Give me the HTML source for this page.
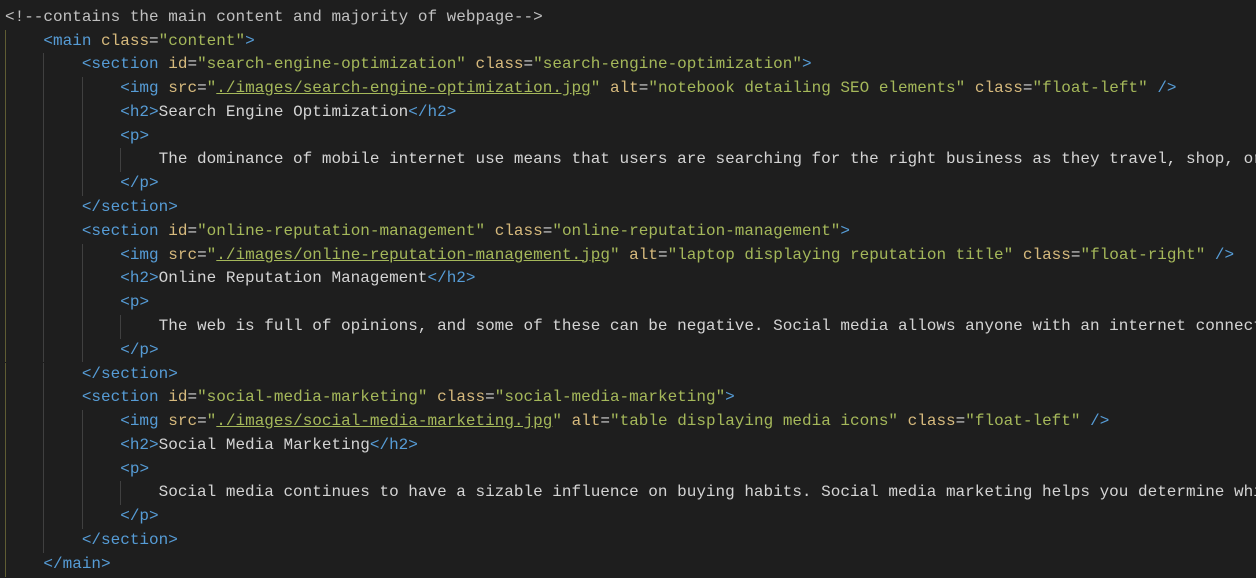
<!DOCTYPE html>
<html><head><meta charset="utf-8"><style>
body{margin:0;background:#1e1e1e;width:1256px;height:578px;overflow:hidden;position:relative;font-family:"Liberation Mono",monospace;font-size:16px}
.l{position:absolute;left:5px;height:23.78px;line-height:23.78px;white-space:pre;color:#d4d4d4}
.g{position:absolute;width:1px;height:23.78px;background:#404040}
.g0{background:#5f5c33}
.t{color:#569cd6}.n{color:#569cd6}.a{color:#d7ba7d}.s{color:#a5b85a}.c{color:#c0c0c0}
.u{text-decoration:underline;text-decoration-color:#a5b85a}
</style></head><body>
<script>
const L=[
[0,'<span class="c">&lt;!--contains the main content and majority of webpage--&gt;</span>'],
[1,'<span class="t">&lt;</span><span class="n">main</span> <span class="a">class</span>=<span class="s">"content"</span><span class="t">&gt;</span>'],
[2,'<span class="t">&lt;</span><span class="n">section</span> <span class="a">id</span>=<span class="s">"search-engine-optimization"</span> <span class="a">class</span>=<span class="s">"search-engine-optimization"</span><span class="t">&gt;</span>'],
[3,'<span class="t">&lt;</span><span class="n">img</span> <span class="a">src</span>=<span class="s">"<span class="u">./images/search-engine-optimization.jpg</span>"</span> <span class="a">alt</span>=<span class="s">"notebook detailing SEO elements"</span> <span class="a">class</span>=<span class="s">"float-left"</span> <span class="t">/&gt;</span>'],
[3,'<span class="t">&lt;</span><span class="n">h2</span><span class="t">&gt;</span>Search Engine Optimization<span class="t">&lt;/</span><span class="n">h2</span><span class="t">&gt;</span>'],
[3,'<span class="t">&lt;</span><span class="n">p</span><span class="t">&gt;</span>'],
[4,'The dominance of mobile internet use means that users are searching for the right business as they travel, shop, or'],
[3,'<span class="t">&lt;/</span><span class="n">p</span><span class="t">&gt;</span>'],
[2,'<span class="t">&lt;/</span><span class="n">section</span><span class="t">&gt;</span>'],
[2,'<span class="t">&lt;</span><span class="n">section</span> <span class="a">id</span>=<span class="s">"online-reputation-management"</span> <span class="a">class</span>=<span class="s">"online-reputation-management"</span><span class="t">&gt;</span>'],
[3,'<span class="t">&lt;</span><span class="n">img</span> <span class="a">src</span>=<span class="s">"<span class="u">./images/online-reputation-management.jpg</span>"</span> <span class="a">alt</span>=<span class="s">"laptop displaying reputation title"</span> <span class="a">class</span>=<span class="s">"float-right"</span> <span class="t">/&gt;</span>'],
[3,'<span class="t">&lt;</span><span class="n">h2</span><span class="t">&gt;</span>Online Reputation Management<span class="t">&lt;/</span><span class="n">h2</span><span class="t">&gt;</span>'],
[3,'<span class="t">&lt;</span><span class="n">p</span><span class="t">&gt;</span>'],
[4,'The web is full of opinions, and some of these can be negative. Social media allows anyone with an internet connect'],
[3,'<span class="t">&lt;/</span><span class="n">p</span><span class="t">&gt;</span>'],
[2,'<span class="t">&lt;/</span><span class="n">section</span><span class="t">&gt;</span>'],
[2,'<span class="t">&lt;</span><span class="n">section</span> <span class="a">id</span>=<span class="s">"social-media-marketing"</span> <span class="a">class</span>=<span class="s">"social-media-marketing"</span><span class="t">&gt;</span>'],
[3,'<span class="t">&lt;</span><span class="n">img</span> <span class="a">src</span>=<span class="s">"<span class="u">./images/social-media-marketing.jpg</span>"</span> <span class="a">alt</span>=<span class="s">"table displaying media icons"</span> <span class="a">class</span>=<span class="s">"float-left"</span> <span class="t">/&gt;</span>'],
[3,'<span class="t">&lt;</span><span class="n">h2</span><span class="t">&gt;</span>Social Media Marketing<span class="t">&lt;/</span><span class="n">h2</span><span class="t">&gt;</span>'],
[3,'<span class="t">&lt;</span><span class="n">p</span><span class="t">&gt;</span>'],
[4,'Social media continues to have a sizable influence on buying habits. Social media marketing helps you determine whi'],
[3,'<span class="t">&lt;/</span><span class="n">p</span><span class="t">&gt;</span>'],
[2,'<span class="t">&lt;/</span><span class="n">section</span><span class="t">&gt;</span>'],
[1,'<span class="t">&lt;/</span><span class="n">main</span><span class="t">&gt;</span>']];
let h='';
L.forEach((x,i)=>{const top=5.8+i*23.78;
for(let k=0;k<x[0];k++)h+=`<div class="g${k==0?' g0':''}" style="left:${5+k*38.4}px;top:${top}px"></div>`;
h+=`<div class="l" style="top:${top}px">${' '.repeat(x[0]*4)}${x[1]}</div>`;});
document.body.innerHTML=h;
</script>
</body></html>
